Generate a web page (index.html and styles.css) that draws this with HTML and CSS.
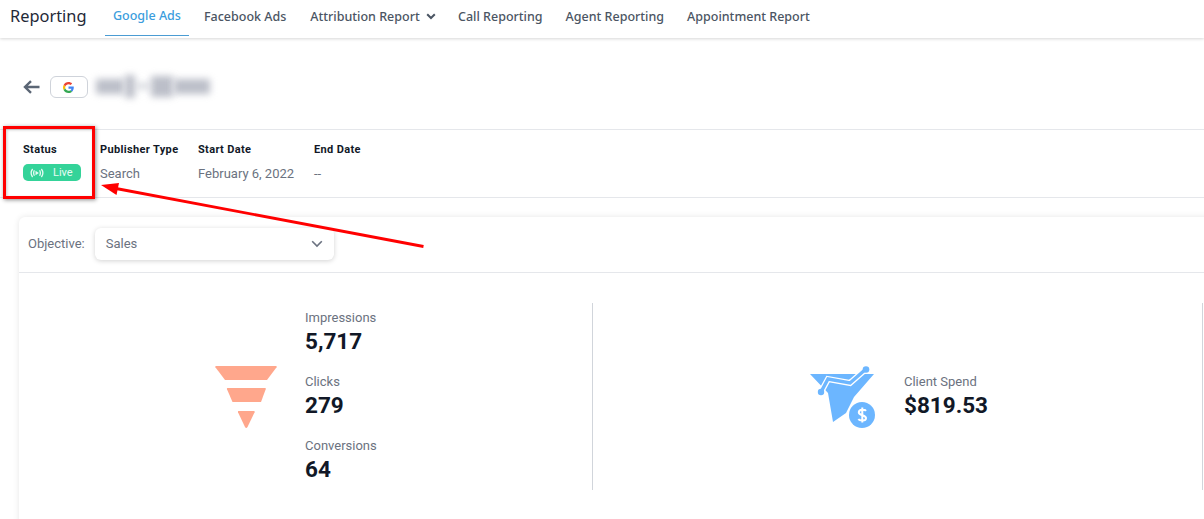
FILE: index.html
```html
<!DOCTYPE html>
<html lang="en">
<head>
<meta charset="utf-8">
<title>Reporting</title>
<link rel="stylesheet" href="styles.css">
</head>
<body>
<header class="topbar">
  <div class="brand">Reporting</div>
  <nav class="nav">
    <a class="nav-item active">Google Ads</a>
    <a class="nav-item wide">Facebook Ads</a>
    <a class="nav-item">Attribution Report
      <svg class="caret" width="10" height="7" viewBox="0 0 10 7"><path d="M1.200 1.200 5 5l3.800-3.800" fill="none" stroke="#4b5563" stroke-width="2"/></svg>
    </a>
    <a class="nav-item">Call Reporting</a>
    <a class="nav-item">Agent Reporting</a>
    <a class="nav-item">Appointment Report</a>
  </nav>
</header>

<section class="title-row">
  <svg class="back" width="17" height="14" viewBox="0 0 17 14"><path d="M16.500 7H3M8 1.200 2 7l6 5.800" fill="none" stroke="#5b6675" stroke-width="2.400"/></svg>
  <span class="g-chip">
    <svg width="11" height="11" viewBox="0 0 48 48">
      <path fill="#EA4335" d="M24 9.500c3.500 0 6.700 1.300 9.100 3.500l6.800-6.800C35.800 2.400 30.200 0 24 0 14.600 0 6.500 5.400 2.600 13.200l7.900 6.100C12.400 13.700 17.700 9.500 24 9.500z"/>
      <path fill="#4285F4" d="M47 24.500c0-1.600-.1-3.100-.4-4.500H24v9h12.900c-.6 3-2.200 5.500-4.700 7.200l7.700 6c4.500-4.200 7.100-10.300 7.100-17.700z"/>
      <path fill="#FBBC05" d="M10.500 28.700c-.5-1.400-.8-3-.8-4.700s.3-3.300.8-4.700l-7.900-6.100C.9 16.500 0 20.100 0 24s.9 7.500 2.600 10.800l7.900-6.100z"/>
      <path fill="#34A853" d="M24 48c6.500 0 11.900-2.100 15.900-5.800l-7.700-6c-2.200 1.400-4.900 2.300-8.200 2.300-6.300 0-11.600-4.200-13.500-9.800l-7.900 6.100C6.500 42.600 14.600 48 24 48z"/>
    </svg>
  </span>
  <span class="blurred"><i class="b1"></i><i class="b2"></i><i class="b3"></i><i class="b4"></i><i class="b5"></i></span>
</section>

<section class="meta">
  <div class="meta-col status"><div class="meta-label">Status</div>
    <span class="live">
      <svg width="14" height="10" viewBox="0 0 14 10" fill="none" stroke="#e6fbf3" stroke-width="1.300"><path d="M2.600 1C.9 3.300.9 6.700 2.600 9M4.400 2.300c-.9 1.600-.9 3.800 0 5.400M11.400 1c1.700 2.300 1.700 5.700 0 8M9.600 2.300c.9 1.600.9 3.800 0 5.400"/><path d="M5.500 2.800v4.400l3.400-2.200z" fill="#e6fbf3" stroke="none"/></svg>
      Live</span>
  </div>
  <div class="meta-col publisher"><div class="meta-label">Publisher Type</div><div class="meta-value">Search</div></div>
  <div class="meta-col start"><div class="meta-label">Start Date</div><div class="meta-value">February 6, 2022</div></div>
  <div class="meta-col"><div class="meta-label">End Date</div><div class="meta-value">--</div></div>
</section>

<section class="card">
  <div class="objective">
    <span class="obj-label">Objective:</span>
    <div class="select"><span>Sales</span>
      <svg width="12" height="8" viewBox="0 0 12 8"><path d="M1.200 1.200 6 6l4.800-4.800" fill="none" stroke="#6b7280" stroke-width="1.600"/></svg>
    </div>
  </div>
  <div class="stats">
    <div class="panel funnel-panel">
      <svg width="62" height="63" viewBox="0 0 62 63" fill="#ffa78c">
        <path d="M1 0h60q1 0 .6 1.200L52 14H10L.4 1.200Q0 0 1 0z"/>
        <path d="M12.500 22h37.600q1 0 .6 1.200L46 36H17.500L12 23.200q-.4-1.200.5-1.200z"/>
        <path d="M23.500 45h15.500q1 0 .6 1.200L32.500 61q-1.300 2-2.500 0l-7-14.800q-.4-1.200.5-1.200z"/>
      </svg>
      <div class="figures">
        <div class="fig"><div class="fig-label">Impressions</div><div class="fig-value">5,717</div></div>
        <div class="fig"><div class="fig-label">Clicks</div><div class="fig-value">279</div></div>
        <div class="fig"><div class="fig-label">Conversions</div><div class="fig-value">64</div></div>
      </div>
    </div>
    <div class="panel spend-panel">
      <svg width="66" height="62" viewBox="0 0 66 62">
        <path d="M0 8h64L44 31 36 47 23 56 18 27z" fill="#6cb6ff"/>
        <path d="M11 26 18 13l22 4 16-14" fill="none" stroke="#fff" stroke-width="6"/>
        <path d="M11 26 18 13l22 4 16-14" fill="none" stroke="#6cb6ff" stroke-width="3.400"/>
        <circle cx="11" cy="26" r="3.200" fill="#6cb6ff"/>
        <circle cx="56" cy="3.500" r="3.300" fill="#6cb6ff"/>
        <circle cx="52" cy="49" r="14.500" fill="#fff"/>
        <circle cx="52" cy="49" r="13" fill="#6cb6ff"/>
        <path d="M56 44.800c-1-1.400-7-1.800-7.200 1.500-.2 3.700 7.400 2.200 7.200 5.900-.2 3.200-6.300 2.700-7.700 1M52.300 41.500v15" fill="none" stroke="#fff" stroke-width="2"/>
      </svg>
      <div class="fig"><div class="fig-label">Client Spend</div><div class="fig-value">$819.53</div></div>
    </div>
  </div>
</section>

<div class="callout"></div>
<svg class="arrow" width="340" height="80" viewBox="0 0 340 80"><path d="M325.500 66.500 18 8.500" stroke="#f00" stroke-width="2.800" fill="none"/><path d="M3 5 21 3 18.500 15z" fill="#f00"/></svg>
</body>
</html>
```
FILE: styles.css
```css
* { box-sizing: border-box; }
html, body { margin: 0; height: 519px; overflow: hidden; background: #fff; }
body { font-family: Roboto, "Liberation Sans", sans-serif; color: #111827; position: relative; }

.topbar { height: 38px; display: flex; align-items: stretch; padding-left: 10px; box-shadow: 0 1px 3px rgba(0,0,0,.16); font-family: "Noto Sans", "Open Sans", sans-serif; }
.brand { font-size: 16.400px; line-height: 31px; color: #1f2937; width: 95px; }
.nav { display: flex; font-size: 12.500px; }
.nav-item { padding: 0 8px; margin-right: 7px; line-height: 33px; color: #4b5563; white-space: nowrap; font-weight: 500; height: 36px; }
.nav-item.wide { margin-right: 8px; }
.nav-item.active { color: #3b9ddd; border-bottom: 1px solid #4b9cd3; line-height: 31px; }
.caret { margin-left: 3px; margin-right: -1px; vertical-align: 1px; }

.title-row { height: 91px; padding: 38px 0 0 23px; display: flex; align-items: flex-start; gap: 10px; }
.back { margin-top: 4px; }
.g-chip { width: 38px; height: 22px; border: 1px solid #cfd3da; border-radius: 6px; display: flex; align-items: center; justify-content: center; padding-right: 2px; }
.blurred { display: flex; margin-left: -2px; margin-top: -5px; height: 30px; align-items: center; gap: 1px; }
.blurred i { display: block; background: #bcbfc9; filter: blur(3.500px); }
.b1 { width: 28px; height: 15px; }
.b2 { width: 10px; height: 23px; }
.b3 { width: 14px; height: 6px; opacity: .6; }
.b4 { width: 22px; height: 21px; }
.b5 { width: 36px; height: 15px; }

.meta { height: 69px; border-top: 1px solid #e5e7eb; border-bottom: 1px solid #e5e7eb; display: flex; padding: 13px 0 0 23px; }
.meta-label { font-size: 11px; font-weight: 700; letter-spacing: .35px; color: #111827; line-height: 13px; }
.meta-value { font-size: 13px; color: #6b7280; margin-top: 10px; line-height: 16px; }
.status { width: 77px; }
.publisher { width: 98px; }
.start { width: 116px; }
.live { display: inline-flex; align-items: center; gap: 9px; width: 58px; height: 17px; margin-top: 8px; padding-left: 7px; border-radius: 5px; background: #34d399; color: #e6fbf3; font-size: 11px; }

.card { margin: 19px -40px 0 19px; height: 320px; border-radius: 6px; background: #fff; box-shadow: 0 0 6px rgba(0,0,0,.1); }
.objective { height: 56px; border-bottom: 1px solid #e5e7eb; display: flex; align-items: flex-start; padding: 11px 0 0 9px; gap: 10px; }
.obj-label { font-size: 13px; color: #6b7280; line-height: 31px; }
.select { width: 239px; height: 32px; border-radius: 6px; background: #fff; box-shadow: 0 1px 5px rgba(0,0,0,.18); display: flex; align-items: center; justify-content: space-between; padding: 0 11px; font-size: 13px; color: #6b7280; line-height: 30px; }

.stats { display: flex; padding-top: 30px; }
.panel { height: 187px; display: flex; align-items: center; }
.funnel-panel { width: 574px; border-right: 1px solid #d1d5db; padding-left: 196px; gap: 28px; }
.spend-panel { width: 610px; border-right: 1px solid #d1d5db; padding-left: 217px; gap: 28px; }
.figures { display: flex; flex-direction: column; gap: 19px; }
.fig-label { font-size: 13px; line-height: 15px; color: #6b7280; }
.fig-value { font-size: 22.500px; font-weight: 700; line-height: 27px; color: #111827; margin-top: 3px; }
.funnel-panel svg { margin-top: 2px; }
.spend-panel .fig { margin-top: -1px; }

.callout { position: absolute; left: 3px; top: 126px; width: 92px; height: 73px; border: 3px solid #f00; box-shadow: 1px 1px 4px rgba(0,0,0,.45), inset 1px 1px 3px rgba(0,0,0,.2); }
.arrow { position: absolute; left: 98px; top: 180px; }
```
